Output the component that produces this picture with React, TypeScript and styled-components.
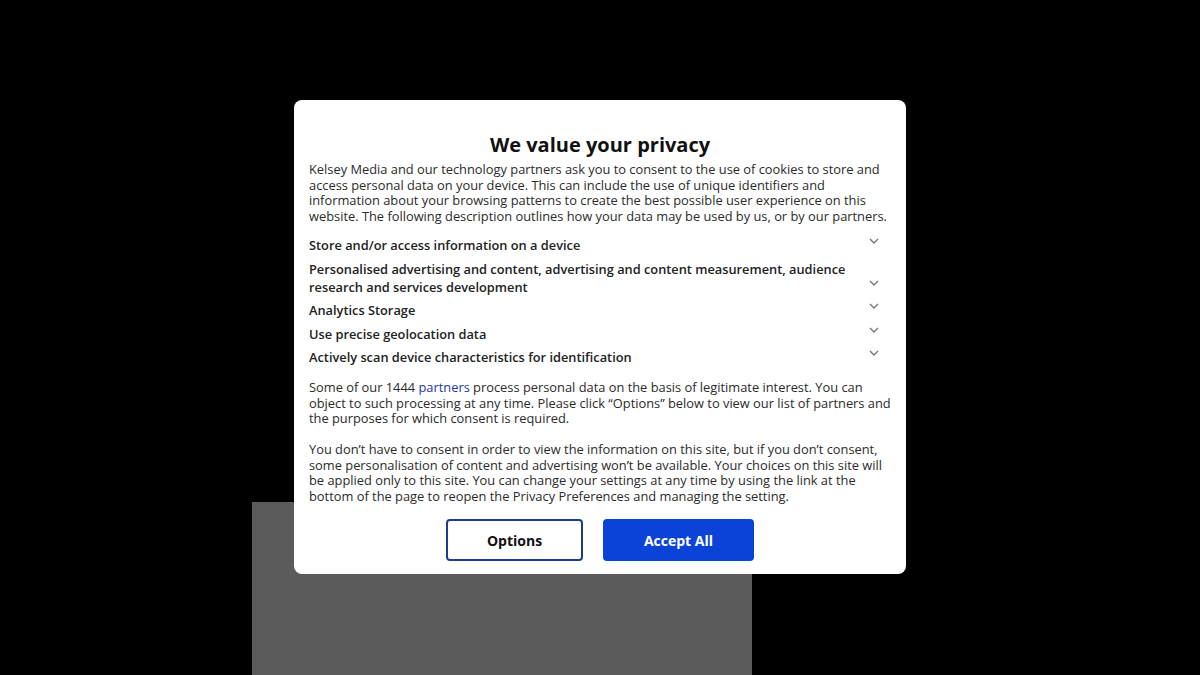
import React from "react";
import styled, { createGlobalStyle } from "styled-components";

const Global = createGlobalStyle`
  html, body { margin: 0; padding: 0; background: #000; }
  body { font-family: "Open Sans", "Noto Sans", sans-serif; }
`;

const Page = styled.div`
  position: relative;
  width: 1200px;
  height: 675px;
  background: #000;
  overflow: hidden;
`;

const Backdrop = styled.div`
  position: absolute;
  left: 252px;
  top: 502px;
  width: 500px;
  height: 173px;
  background: #5b5b5b;
`;

const Overlay = styled.div`
  position: absolute;
  inset: 0;
  display: flex;
  justify-content: center;
  align-items: flex-start;
  padding-top: 100px;
`;

const Modal = styled.div`
  width: 612px;
  box-sizing: border-box;
  background: #fff;
  border-radius: 8px;
  padding: 31px 15px 13px 15px;
  color: #222;
`;

const Title = styled.h1`
  margin: 0 0 3px 0;
  font-size: 20px;
  line-height: 28px;
  font-weight: 700;
  text-align: center;
  color: #111;
`;

const Para = styled.p<{ $gap?: number }>`
  margin: 0 0 ${(p) => p.$gap ?? 0}px 0;
  font-size: 12.85px;
  line-height: 15.5px;
  color: #2b2b2b;
`;

const Purposes = styled.div`
  display: flex;
  flex-direction: column;
  gap: 5.5px;
  margin: 12px 0 14px 0;
`;

const Purpose = styled.div`
  display: flex;
  align-items: flex-end;
  justify-content: space-between;
`;

const PurposeLabel = styled.span`
  font-size: 12.8px;
  line-height: 18px;
  font-weight: 600;
  color: #222;
  max-width: 545px;
`;

const Chevron = styled.svg`
  width: 12px;
  height: 8px;
  margin-right: 11px;
  margin-bottom: 9px;
  flex-shrink: 0;
`;

const Link = styled.a`
  color: #1f35a8;
  text-decoration: none;
`;

const Buttons = styled.div`
  display: flex;
  justify-content: center;
  gap: 20px;
  margin-top: 15px;
`;

const Button = styled.button<{ $primary?: boolean }>`
  height: 42px;
  width: ${(p) => (p.$primary ? 151 : 137)}px;
  border-radius: 4px;
  box-sizing: border-box;
  font-family: "Open Sans", sans-serif;
  font-size: 14px;
  font-weight: 700;
  cursor: pointer;
  border: 2px solid ${(p) => (p.$primary ? "#0b43d8" : "#1c3c8c")};
  background: ${(p) => (p.$primary ? "#0b43d8" : "#fff")};
  color: ${(p) => (p.$primary ? "#fff" : "#111")};
`;

const ChevronIcon = () => (
  <Chevron viewBox="0 0 12 8">
    <path d="M2 2 L6 6 L10 2" fill="none" stroke="#777" strokeWidth="1.4" />
  </Chevron>
);

const purposes = [
  "Store and/or access information on a device",
  "Personalised advertising and content, advertising and content measurement, audience research and services development",
  "Analytics Storage",
  "Use precise geolocation data",
  "Actively scan device characteristics for identification",
];

export default function App() {
  return (
    <Page>
      <Global />
      <Backdrop />
      <Overlay>
        <Modal>
          <Title>We value your privacy</Title>
          <Para>
            Kelsey Media and our technology partners ask you to consent to the use of cookies to store and
            access personal data on your device. This can include the use of unique identifiers and
            information about your browsing patterns to create the best possible user experience on this
            website. The following description outlines how your data may be used by us, or by our partners.
          </Para>
          <Purposes>
            {purposes.map((p) => (
              <Purpose key={p}>
                <PurposeLabel>{p}</PurposeLabel>
                <ChevronIcon />
              </Purpose>
            ))}
          </Purposes>
          <Para $gap={15.5}>
            Some of our 1444 <Link>partners</Link> process personal data on the basis of legitimate interest. You can
            object to such processing at any time. Please click “Options” below to view our list of partners and
            the purposes for which consent is required.
          </Para>
          <Para>
            You don’t have to consent in order to view the information on this site, but if you don’t consent,
            some personalisation of content and advertising won’t be available. Your choices on this site will
            be applied only to this site. You can change your settings at any time by using the link at the
            bottom of the page to reopen the Privacy Preferences and managing the setting.
          </Para>
          <Buttons>
            <Button>Options</Button>
            <Button $primary>Accept All</Button>
          </Buttons>
        </Modal>
      </Overlay>
    </Page>
  );
}
